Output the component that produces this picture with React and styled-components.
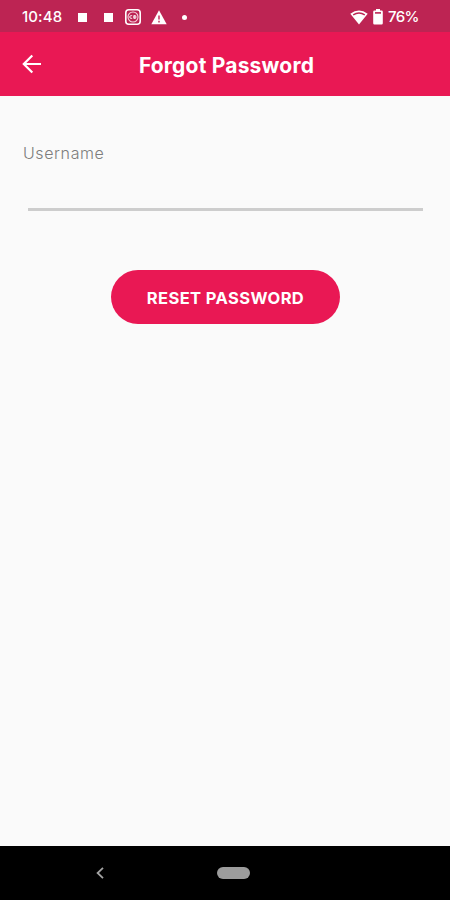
import React from "react";
import styled, { createGlobalStyle } from "styled-components";

const App = () => {
  return (
    <>
      <GlobalStyle />
      <Screen>
        <StatusBar>
          <Clock>10:48</Clock>
          <Notifications>
            <Square />
            <Square />
            <svg width="16" height="16" viewBox="0 0 16 16" fill="none">
              <rect x="0.8" y="0.8" width="14.4" height="14.4" rx="3" stroke="#fff" strokeWidth="1.6" />
              <circle cx="8" cy="8" r="5" stroke="#f6d3de" strokeWidth="1.1" />
              <path
                d="M7.2 6.7H6a1.3 1.3 0 0 0 0 2.6h1.2M8.8 6.6h1.5a.7.7 0 0 1 0 1.4H8.8h1.5a.7.7 0 0 1 0 1.4H8.8z"
                stroke="#fff"
                strokeWidth="0.9"
              />
            </svg>
            <svg width="16" height="15" viewBox="0 0 16 15">
              <path d="M8 0.3 15.7 14.3H0.3z" fill="#fff" />
              <path d="M8 5.5v4M8 10.8v1.6" stroke="#bd2453" strokeWidth="1.4" />
            </svg>
            <Dot />
          </Notifications>
          <Indicators>
            <svg width="18" height="15" viewBox="0 0 18 15">
              <path d="M0.3 3.8Q9-3 17.7 3.8L9 14.6z" fill="#fff" />
              <path d="M3.2 4.9Q9 1.1 14.8 4.9" stroke="#bd2453" strokeWidth="1.4" fill="none" />
            </svg>
            <svg width="10" height="16" viewBox="0 0 10 16">
              <path
                d="M3 0h4v1.5h1.6q1.2 0 1.2 1.2v11.6q0 1.2-1.2 1.2H1.4Q.2 15.5.2 14.3V2.7Q.2 1.5 1.4 1.5H3z"
                fill="#fff"
              />
              <path d="M2 3.9h6" stroke="#bd2453" strokeWidth="1.6" />
            </svg>
            <Battery>76%</Battery>
          </Indicators>
        </StatusBar>
        <Header>
          <BackButton aria-label="Back">
            <svg width="20" height="20" viewBox="0 0 20 20" fill="none" stroke="#fff" strokeWidth="2.2">
              <path d="M19 10H2M10.3 1.5 1.8 10l8.5 8.5" />
            </svg>
          </BackButton>
          <Title>Forgot Password</Title>
        </Header>
        <Form>
          <Label htmlFor="username">Username</Label>
          <Input id="username" type="text" />
          <ResetButton type="button">RESET PASSWORD</ResetButton>
        </Form>
        <NavBar>
          <svg width="8" height="12" viewBox="0 0 8 12" fill="none" stroke="#a3a3a3" strokeWidth="1.8">
            <path d="M7 0.8 1.6 6 7 11.2" />
          </svg>
          <HomePill />
        </NavBar>
      </Screen>
    </>
  );
};

export default App;

const GlobalStyle = createGlobalStyle`
  * {
    box-sizing: border-box;
  }
  body {
    margin: 0;
    font-family: "Inter", "Open Sans", sans-serif;
  }
`;

const Screen = styled.div`
  display: flex;
  flex-direction: column;
  width: 450px;
  height: 900px;
  background: #fafafa;
  overflow: hidden;

  svg {
    display: block;
    flex-shrink: 0;
  }
`;

const StatusBar = styled.div`
  display: flex;
  align-items: center;
  height: 32px;
  padding: 2px 31px 0 22px;
  background: #bd2453;
  color: #fff;
`;

const Clock = styled.div`
  width: 56px;
  font-size: 15px;
  line-height: 18px;
  font-weight: 500;
  letter-spacing: 0.1px;
  white-space: nowrap;
`;

const Notifications = styled.div`
  display: flex;
  align-items: center;

  svg:nth-of-type(1) {
    margin-left: 12px;
  }
  svg:nth-of-type(2) {
    margin-left: 10px;
  }
`;

const Square = styled.span`
  width: 9px;
  height: 9px;
  background: #fff;

  & + & {
    margin-left: 17px;
  }
`;

const Dot = styled.span`
  width: 5px;
  height: 5px;
  margin-left: 15px;
  border-radius: 50%;
  background: #fff;
`;

const Indicators = styled.div`
  display: flex;
  align-items: center;
  gap: 5px;
  margin-left: auto;
`;

const Battery = styled.span`
  width: 31px;
  font-size: 15px;
  line-height: 18px;
  font-weight: 500;
  letter-spacing: -0.6px;
  white-space: nowrap;
`;

const Header = styled.header`
  display: grid;
  grid-template-columns: 64px 1fr 64px;
  align-items: center;
  height: 64px;
  background: #e91854;
`;

const BackButton = styled.button`
  margin-left: 22px;
  padding: 0;
  border: none;
  background: none;
`;

const Title = styled.h1`
  margin: 4px 0 0 3px;
  font-size: 21px;
  line-height: 24px;
  font-weight: 700;
  letter-spacing: 0.2px;
  text-align: center;
  white-space: nowrap;
  color: #fff;
`;

const Form = styled.form`
  display: flex;
  flex-direction: column;
  flex: 1;
  padding: 48px 27px 0 28px;
`;

const Label = styled.label`
  margin-left: -5px;
  font-size: 16px;
  line-height: 18px;
  font-weight: 300;
  letter-spacing: 0.6px;
  color: #7d7d7d;
`;

const Input = styled.input`
  height: 49px;
  padding: 0;
  border: none;
  border-bottom: 3px solid #cdcdcd;
  border-radius: 0;
  outline: none;
  background: transparent;
  font: inherit;
`;

const ResetButton = styled.button`
  align-self: center;
  width: 229px;
  height: 54px;
  margin-top: 59px;
  padding: 2px 0 0;
  border: none;
  border-radius: 27px;
  background: #e91854;
  font-family: inherit;
  font-size: 16.5px;
  font-weight: 700;
  letter-spacing: 0.4px;
  white-space: nowrap;
  color: #fff;
`;

const NavBar = styled.nav`
  display: flex;
  align-items: center;
  gap: 113px;
  height: 54px;
  padding-left: 96px;
  background: #000;
`;

const HomePill = styled.span`
  width: 33px;
  height: 12px;
  border-radius: 6px;
  background: #9c9c9c;
`;
